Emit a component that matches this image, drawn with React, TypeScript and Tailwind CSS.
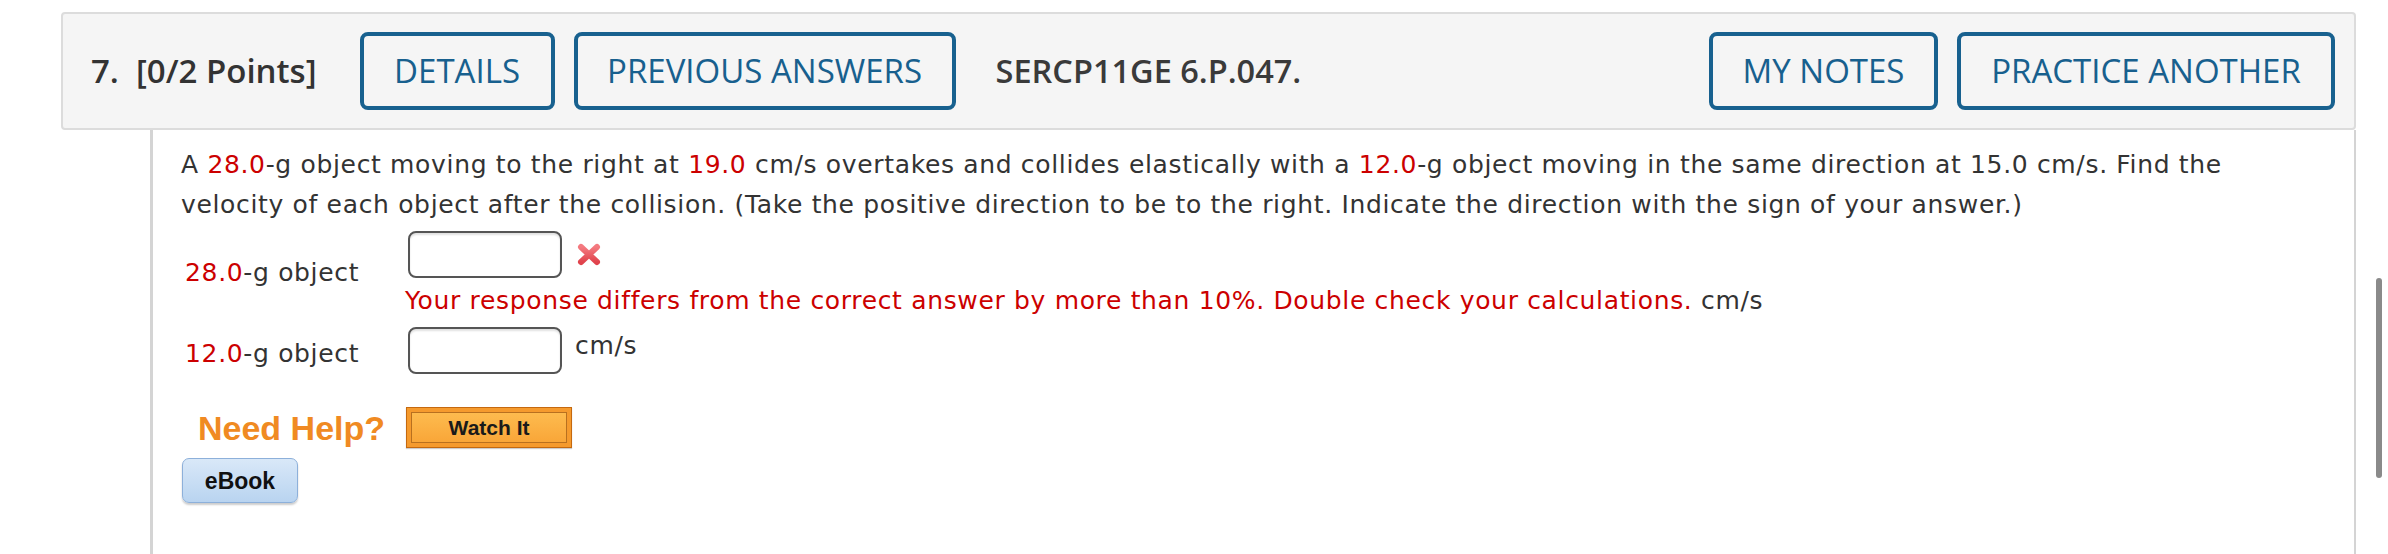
import React from "react";

const body = { fontFamily: '"DejaVu Sans", Verdana, sans-serif' };
const head = { fontFamily: '"Open Sans", "Noto Sans", sans-serif' };
const arial = { fontFamily: '"Liberation Sans", Arial, sans-serif' };

function HeadButton({ label, w }: { label: string; w: string }) {
  return (
    <div
      className={`${w} h-[78px] shrink-0 flex items-center justify-center rounded-[8px] border-[4px] border-[#18618f] text-[33px] text-[#18608e]`}
      style={head}
    >
      {label}
    </div>
  );
}

function XIcon() {
  return (
    <svg width="26" height="25" viewBox="0 0 26 25" className="shrink-0">
      <defs>
        <linearGradient id="xg" x1="0" y1="0" x2="0" y2="1">
          <stop offset="0" stopColor="#f47a80" />
          <stop offset="1" stopColor="#e0434c" />
        </linearGradient>
      </defs>
      <path d="M5 5 L21 20 M21 5 L5 20" stroke="url(#xg)" strokeWidth="6" strokeLinecap="round" fill="none" />
    </svg>
  );
}

function Input() {
  return (
    <div className="ml-[3px] w-[154px] h-[47px] shrink-0 rounded-[8px] border-2 border-[#555] bg-white shadow-[inset_0_2px_2px_rgba(0,0,0,0.12)]" />
  );
}

export default function App() {
  return (
    <div className="relative w-[2388px] h-[554px] overflow-hidden bg-white">
      <div className="pt-[12px] pl-[61px] pr-[32px]">
        {/* header */}
        <div className="h-[118px] flex items-center rounded-[4px] border-2 border-[#dcdcdc] bg-[#f5f5f5] pl-[28px] pr-[19px]">
          <span className="text-[33px] font-semibold text-[#333]" style={head}>
            7.
          </span>
          <span className="ml-[17px] text-[33px] font-semibold text-[#333]" style={head}>
            [0/2 Points]
          </span>
          <div className="ml-[43px] flex gap-[19px]">
            <HeadButton label="DETAILS" w="w-[195px]" />
            <HeadButton label="PREVIOUS ANSWERS" w="w-[382px]" />
          </div>
          <span className="ml-[40px] text-[32.5px] font-semibold text-[#3a3a3a]" style={head}>
            SERCP11GE 6.P.047.
          </span>
          <div className="ml-auto flex gap-[19px]">
            <HeadButton label="MY NOTES" w="w-[229px]" />
            <HeadButton label="PRACTICE ANOTHER" w="w-[378px]" />
          </div>
        </div>

        {/* content */}
        <div
          className="ml-[89px] h-[424px] border-l-[3px] border-r-2 border-[#d4d4d4] pt-[15px] pl-[28px] pr-[24px] text-[25px] leading-[40px] tracking-[0.66px] text-[#333]"
          style={body}
        >
          <p className="max-w-[2100px]">
            A <span className="text-[#cc0000]">28.0</span>-g object moving to the right at{" "}
            <span className="text-[#cc0000]">19.0</span> cm/s overtakes and collides elastically with a{" "}
            <span className="text-[#cc0000]">12.0</span>-g object moving in the same direction at 15.0 cm/s. Find the
            velocity of each object after the collision. (Take the positive direction to be to the right. Indicate the
            direction with the sign of your answer.)
          </p>

          <div className="mt-[6px] ml-[4px] grid grid-cols-[220px_auto] gap-y-[6px]">
            <div className="self-center whitespace-nowrap pb-[6px]">
              <span className="text-[#cc0000]">28.0</span>-g object
            </div>
            <div className="flex flex-col">
              <div className="flex items-center gap-[14px]">
                <Input />
                <XIcon />
              </div>
              <div className="mt-[3px] whitespace-nowrap">
                <span className="text-[#cc0000]">
                  Your response differs from the correct answer by more than 10%. Double check your calculations.
                </span>{" "}
                cm/s
              </div>
            </div>

            <div className="self-center whitespace-nowrap pt-[7px]">
              <span className="text-[#cc0000]">12.0</span>-g object
            </div>
            <div className="flex items-start gap-[13px]">
              <Input />
              <span className="-mt-[1px]">cm/s</span>
            </div>
          </div>

          <div className="mt-[33px] ml-[17px] flex items-center gap-[21px]">
            <span className="text-[34px] leading-none font-bold tracking-normal text-[#f08a22]" style={arial}>
              Need Help?
            </span>
            <div className="w-[166px] h-[41px] border border-[#c5690f] bg-[#f59a2d] p-[4px] shadow-[0_1px_1px_rgba(0,0,0,0.2)]">
              <div
                className="h-full flex items-center justify-center border border-[#b8701f] bg-gradient-to-b from-[#fdbb4e] to-[#f9a638] text-[21px] font-bold tracking-normal text-[#1a1a1a]"
                style={arial}
              >
                Watch It
              </div>
            </div>
          </div>

          <div
            className="mt-[10px] ml-[1px] w-[116px] h-[45px] flex items-center justify-center rounded-[7px] border border-[#8db0da] bg-gradient-to-b from-[#d9e8f8] to-[#b9d4f0] shadow-[0_2px_2px_rgba(0,0,0,0.2)] text-[23px] font-bold tracking-normal text-[#111]"
            style={arial}
          >
            eBook
          </div>
        </div>
      </div>

      {/* overlay scrollbar */}
      <div className="absolute left-[2376px] top-[278px] w-[6px] h-[200px] rounded-full bg-[#8a8a8a]" />
    </div>
  );
}
